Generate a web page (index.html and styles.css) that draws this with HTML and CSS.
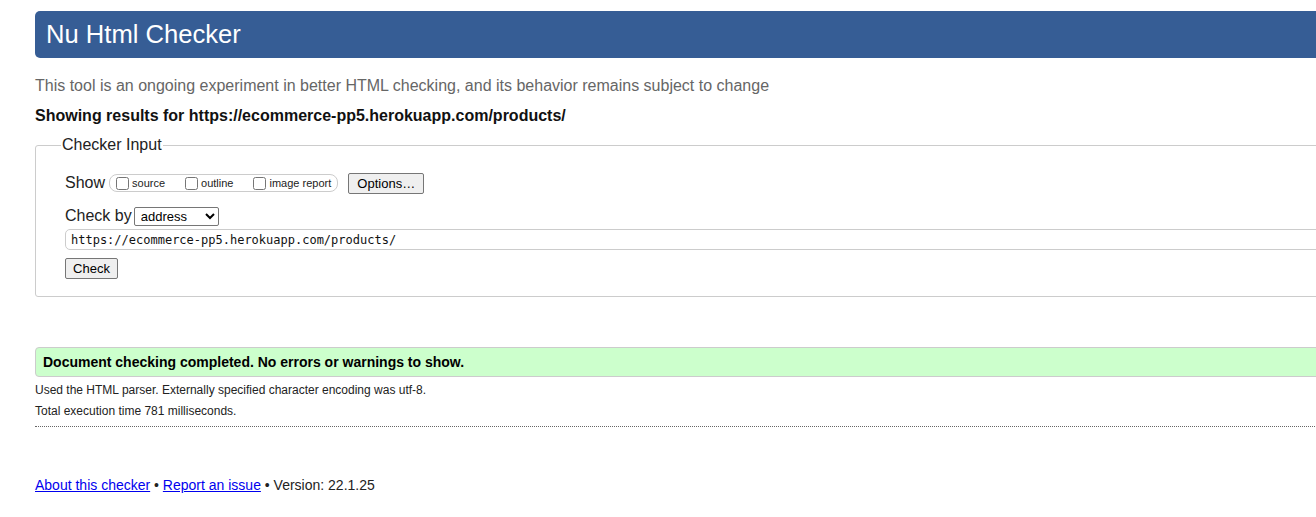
FILE: index.html
```html
<!DOCTYPE html>
<html>
<head>
<meta charset="utf-8">
<title>Nu Html Checker</title>
<link rel="stylesheet" href="styles.css">
</head>
<body>
<div class="page">
  <h1 class="title-bar">Nu Html Checker</h1>
  <p class="tagline">This tool is an ongoing experiment in better HTML checking, and its behavior remains subject to change</p>
  <p class="showing">Showing results for https://ecommerce-pp5.herokuapp.com/products/</p>
  <fieldset class="input-box">
    <legend class="input-legend">Checker Input</legend>
    <div class="row show-row">
      <span class="row-label">Show</span>
      <fieldset class="options-group">
        <label class="opt"><input type="checkbox" class="cb">source</label>
        <label class="opt"><input type="checkbox" class="cb">outline</label>
        <label class="opt last"><input type="checkbox" class="cb">image report</label>
      </fieldset>
      <button class="btn options-btn">Options…</button>
    </div>
    <div class="row checkby-row">
      <span class="row-label">Check by</span>
      <select class="sel"><option>address</option></select>
    </div>
    <input class="url" type="text" value="https://ecommerce-pp5.herokuapp.com/products/">
    <div class="row">
      <button class="btn check-btn">Check</button>
    </div>
  </fieldset>
  <p class="success">Document checking completed. No errors or warnings to show.</p>
  <p class="details">Used the HTML parser. Externally specified character encoding was utf-8.</p>
  <p class="details">Total execution time 781 milliseconds.</p>
  <hr class="sep">
  <p class="footer"><a href="#">About this checker</a> • <a href="#">Report an issue</a> • Version: 22.1.25</p>
</div>
</body>
</html>
```

FILE: styles.css
```css
html, body {
  margin: 0;
  padding: 0;
  overflow: hidden;
  background: #fff;
}
body {
  font-family: "Liberation Sans", Arial, sans-serif;
  color: #222;
}
.page {
  padding: 11px 0 0 35px;
  width: 1340px;
}
.title-bar {
  margin: 0;
  height: 47px;
  box-sizing: border-box;
  background: #365d95;
  color: #fff;
  font-weight: normal;
  font-size: 25.6px;
  line-height: 47px;
  padding-left: 11px;
  border-radius: 5px 0 0 5px;
}
.tagline {
  margin: 18px 0 0 0;
  font-size: 16px;
  line-height: 20px;
  color: #666;
}
.showing {
  margin: 10px 0 0 0;
  font-size: 16px;
  line-height: 20px;
  font-weight: bold;
  color: #111;
}
.input-box {
  margin: 10px 0 0 0;
  border: 1px solid #ccc;
  border-radius: 3px;
  padding: 6px 0 17px 29px;
  min-width: 0;
}
.input-legend {
  font-size: 16px;
  padding: 0 1px;
  margin-left: -4px;
  color: #222;
}
.row {
  display: flex;
  align-items: center;
}
.show-row {
  margin-top: 12px;
  height: 22px;
}
.row-label {
  font-size: 16px;
  margin-right: 4px;
}
.options-group {
  display: flex;
  align-items: center;
  margin: 0 10px 0 0;
  padding: 0 6px 0 6px;
  border: 1px solid #ccc;
  border-radius: 8px;
  height: 18px;
  box-sizing: border-box;
  min-width: 0;
}
.opt {
  display: flex;
  align-items: center;
  font-size: 11px;
  margin-right: 20px;
}
.opt.last {
  margin-right: 0;
}
.cb {
  width: 13px;
  height: 13px;
  margin: 0 3px 0 0;
}
.btn {
  font-family: "Liberation Sans", Arial, sans-serif;
  font-size: 13px;
  background: #efefef;
  border: 1px solid #767676;
  border-radius: 2px;
  color: #000;
  padding: 0 6px;
  height: 21px;
}
.options-btn {
  width: 76px;
}
.checkby-row {
  margin-top: 11px;
  height: 22px;
}
.checkby-row .row-label {
  margin-right: 2px;
}
.sel {
  font-family: "Liberation Sans", Arial, sans-serif;
  font-size: 13px;
  width: 85px;
  height: 19px;
  border: 1px solid #767676;
  border-radius: 2px;
  background: #fff;
  padding: 0 2px;
}
.url {
  display: block;
  margin-top: 2px;
  width: 100%;
  box-sizing: border-box;
  height: 21px;
  border: 1px solid #ccc;
  border-radius: 5px;
  font-family: "DejaVu Sans Mono", "Liberation Mono", monospace;
  font-size: 12px;
  padding: 0 5px;
  color: #111;
}
.check-btn {
  margin-top: 8px;
  width: 53px;
  font-size: 13px;
}
.success {
  margin: 50px 0 0 0;
  height: 30px;
  box-sizing: border-box;
  background: #ccffcc;
  border: 1px solid #ccc;
  border-radius: 4px 0 0 4px;
  font-size: 14px;
  font-weight: bold;
  line-height: 28px;
  padding-left: 7px;
  color: #000;
}
.details {
  margin: 6px 0 0 0;
  font-size: 12px;
  line-height: 15px;
  color: #222;
}
.sep {
  margin: 7px 0 0 0;
  border: 0;
  border-top: 1px dotted #666;
  height: 0;
}
.footer {
  margin: 49px 0 0 0;
  font-size: 14px;
  line-height: 18px;
  color: #222;
}
.footer a {
  color: #00e;
}
```
